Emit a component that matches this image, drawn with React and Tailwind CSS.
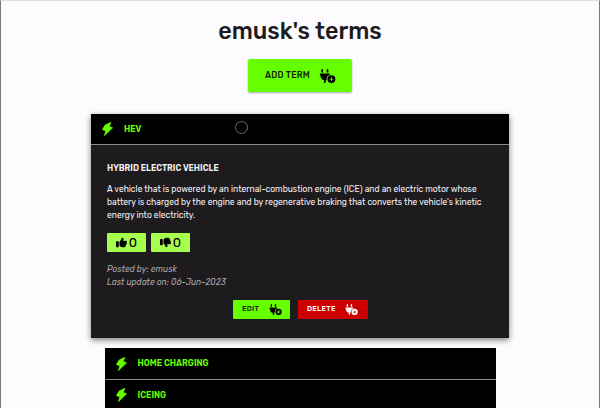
import { FaPlugCirclePlus, FaPlugCircleBolt, FaPlugCircleXmark, FaThumbsUp, FaThumbsDown } from "react-icons/fa6";

function Bolt({ className }) {
  return (
    <svg viewBox="0 0 32 41" className={className} fill="currentColor" stroke="currentColor" strokeWidth="2" strokeLinejoin="round">
      <path d="M26 1 9 9 1 22 11 26 7 40 31 17 21 13Z" />
    </svg>
  );
}

function TermHeader({ label, className }) {
  return (
    <div className={"flex items-center bg-black text-[#66ff00] " + className}>
      <Bolt className="h-[14px] w-[11px] shrink-0" />
      <span className="ml-[11px] text-[8.5px] leading-[13px] font-semibold">{label}</span>
    </div>
  );
}

function Vote({ icon: Icon }) {
  return (
    <button className="flex h-[19px] w-[39px] items-center justify-center gap-[2px] rounded-[1px] bg-[#a6ff4d] text-black">
      <Icon className="size-[11px]" />
      <span className="text-[13px] leading-none">0</span>
    </button>
  );
}

export default function App() {
  return (
    <div className="h-[408px] w-[600px] overflow-hidden border-x border-t border-t-[#e2e0e2] border-r-[#777] border-l-[#777] bg-[#fdfbfe] font-['Rubik','Inter',sans-serif] text-[#1e1b1e]">
      <h1 className="mt-[15px] text-center text-[23.4px] leading-[30px] font-medium">emusk's terms</h1>
      <button className="mx-auto mt-[13px] flex h-[33px] w-[104px] items-center rounded-[2px] bg-[#66ff00] pl-[17px] text-[#14230b] shadow-[0_1px_2px_rgba(0,0,0,0.35)]">
        <span className="w-[45px] text-left text-[8.6px] font-medium tracking-[0.24px] whitespace-nowrap">ADD TERM</span>
        <FaPlugCirclePlus className="ml-[9px] h-[14px] w-[17px] text-black" />
      </button>
      <main className="mx-auto mt-[22px] w-[418px]">
        <article className="h-[224px] bg-[#1e1b1e] text-[#f4f2f4] shadow-[0_2px_6px_rgba(0,0,0,0.5)]">
          <div className="relative">
            <TermHeader label="HEV" className="h-[31px] border-b border-[#8d8b8d] pl-[11px]" />
            <span className="absolute top-[7px] left-[144px] size-[13px] rounded-full border-[1.5px] border-[#6c6c6c]" />
          </div>
          <div className="px-[16px] pt-[17px]">
            <h2 className="text-[8.4px] leading-[13px] font-semibold whitespace-nowrap">HYBRID ELECTRIC VEHICLE</h2>
            <p className="mt-[8px] text-[8.5px] leading-[13px] whitespace-nowrap">
              <span className="block">A vehicle that is powered by an internal-combustion engine (ICE) and an electric motor whose</span>
              <span className="block">battery is charged by the engine and by regenerative braking that converts the vehicle's kinetic</span>
              <span className="block">energy into electricity.</span>
            </p>
            <div className="mt-[11px] flex gap-[5px]">
              <Vote icon={FaThumbsUp} />
              <Vote icon={FaThumbsDown} />
            </div>
            <p className="mt-[11px] text-[8.5px] leading-[13px] text-[#aaa8aa] italic">
              <span className="block">Posted by: emusk</span>
              <span className="block">Last update on: 06-Jun-2023</span>
            </p>
            <div className="mt-[11px] ml-[126px] flex gap-[8px] text-[7.2px] font-medium tracking-[0.3px]">
              <button className="flex h-[19px] w-[57px] items-center rounded-[1px] bg-[#66ff00] pl-[9px] text-[#14230b]">
                <span className="w-[27px] text-left">EDIT</span>
                <FaPlugCircleBolt className="h-[11px] w-[13px] text-black" />
              </button>
              <button className="flex h-[19px] w-[70px] items-center rounded-[1px] bg-[#cc0000] pl-[9px] text-white">
                <span className="w-[38px] text-left">DELETE</span>
                <FaPlugCircleXmark className="h-[11px] w-[13px]" />
              </button>
            </div>
          </div>
        </article>
        <div className="mx-auto mt-[10px] w-[391px]">
          <TermHeader label="HOME CHARGING" className="h-[32px] border-b border-[#8d8b8d] pl-[11px]" />
          <TermHeader label="ICEING" className="h-[31px] border-b border-[#8d8b8d] pl-[11px]" />
        </div>
      </main>
    </div>
  );
}
